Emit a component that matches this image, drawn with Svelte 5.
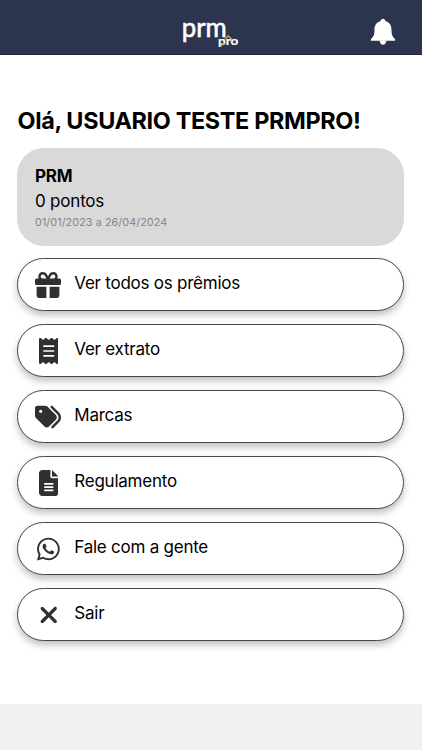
<script>
  const items = [
    { label: 'Ver todos os prêmios', box: '0 0 512 512', w: 26,
      d: 'M190.5 68.8L225.3 128H152c-22.1 0-40-17.9-40-40s17.9-40 40-40h2.2c14.9 0 28.8 7.9 36.3 20.8zM64 88c0 14.4 3.5 28 9.6 40H32c-17.7 0-32 14.3-32 32v64c0 17.7 14.3 32 32 32H480c17.7 0 32-14.3 32-32V160c0-17.7-14.3-32-32-32H438.4c6.1-12 9.6-25.6 9.6-40c0-48.6-39.4-88-88-88h-2.2c-31.9 0-61.5 16.9-77.7 44.4L256 85.5l-24.1-41C215.7 16.9 186.1 0 154.2 0H152C103.4 0 64 39.4 64 88zm336 0c0 22.1-17.9 40-40 40H286.7l34.8-59.2C329.1 55.9 342.9 48 357.8 48H360c22.1 0 40 17.9 40 40zM32 288V464c0 26.5 21.5 48 48 48H224V288H32zM288 512H432c26.5 0 48-21.5 48-48V288H288V512z' },
    { label: 'Ver extrato', box: '0 0 384 512', w: 19.5,
      d: 'M14 2.2C22.5-1.7 32.5-.3 39.6 5.8L80 40.4 120.4 5.8c9-7.7 22.3-7.7 31.2 0L192 40.4 232.4 5.8c9-7.7 22.3-7.7 31.2 0L304 40.4 344.4 5.8c7.1-6.1 17.1-7.5 25.6-3.6s14 12.4 14 21.8V488c0 9.4-5.5 17.9-14 21.8s-18.5 2.5-25.6-3.6L304 471.6l-40.4 34.6c-9 7.7-22.3 7.7-31.2 0L192 471.6l-40.4 34.6c-9 7.7-22.3 7.7-31.2 0L80 471.6 39.6 506.2c-7.1 6.1-17.1 7.5-25.6 3.6S0 497.4 0 488V24C0 14.6 5.5 6.1 14 2.2zM96 144c-8.8 0-16 7.2-16 16s7.2 16 16 16H288c8.8 0 16-7.2 16-16s-7.2-16-16-16H96zM80 352c0 8.8 7.2 16 16 16H288c8.8 0 16-7.2 16-16s-7.2-16-16-16H96c-8.8 0-16 7.2-16 16zM96 240c-8.8 0-16 7.2-16 16s7.2 16 16 16H288c8.8 0 16-7.2 16-16s-7.2-16-16-16H96z' },
    { label: 'Marcas', box: '0 0 512 512', w: 26,
      d: 'M345 39.1L472.8 168.4c52.4 53 52.4 138.2 0 191.2L360.8 472.9c-9.3 9.4-24.5 9.5-33.9 .2s-9.5-24.5-.2-33.9L438.6 325.9c33.9-34.3 33.9-89.4 0-123.7L310.9 72.9c-9.3-9.4-9.2-24.6 .2-33.9s24.6-9.2 33.9 .2zM0 229.5V80C0 53.5 21.5 32 48 32H197.5c17 0 33.3 6.7 45.3 18.7l168 168c25 25 25 65.5 0 90.5L277.3 442.7c-25 25-65.5 25-90.5 0l-168-168C6.7 262.7 0 246.5 0 229.5zM144 144a32 32 0 1 0 -64 0 32 32 0 1 0 64 0z' },
    { label: 'Regulamento', box: '0 0 384 512', w: 19.5,
      d: 'M64 0C28.7 0 0 28.7 0 64V448c0 35.3 28.7 64 64 64H320c35.3 0 64-28.7 64-64V160H256c-17.7 0-32-14.3-32-32V0H64zM256 0V128H384L256 0zM112 256H272c8.8 0 16 7.2 16 16s-7.2 16-16 16H112c-8.8 0-16-7.2-16-16s7.2-16 16-16zm0 64H272c8.8 0 16 7.2 16 16s-7.2 16-16 16H112c-8.8 0-16-7.2-16-16s7.2-16 16-16zm0 64H272c8.8 0 16 7.2 16 16s-7.2 16-16 16H112c-8.8 0-16-7.2-16-16s7.2-16 16-16z' },
    { label: 'Fale com a gente', box: '0 0 448 512', w: 22.75,
      d: 'M380.9 97.1C339 55.1 283.2 32 223.9 32c-122.4 0-222 99.6-222 222 0 39.1 10.2 77.3 29.6 111L0 480l117.7-30.9c32.4 17.7 68.9 27 106.1 27h.1c122.3 0 224.1-99.6 224.1-222 0-59.3-25.2-115-67.1-157zm-157 341.6c-33.2 0-65.7-8.9-94-25.7l-6.7-4-69.8 18.3L72 359.2l-4.4-7c-18.5-29.4-28.2-63.3-28.2-98.2 0-101.7 82.8-184.5 184.6-184.5 49.3 0 95.6 19.2 130.4 54.1 34.8 34.9 56.2 81.2 56.1 130.5 0 101.8-84.9 184.6-186.6 184.6zm101.2-138.2c-5.5-2.8-32.8-16.2-37.9-18-5.1-1.9-8.8-2.8-12.5 2.8-3.7 5.6-14.3 18-17.6 21.8-3.2 3.7-6.5 4.2-12 1.4-32.6-16.3-54-29.1-75.5-66-5.7-9.8 5.7-9.1 16.3-30.3 1.8-3.7.9-6.9-.5-9.7-1.4-2.8-12.5-30.1-17.1-41.2-4.5-10.8-9.1-9.3-12.5-9.5-3.2-.2-6.9-.2-10.6-.2-3.7 0-9.7 1.4-14.8 6.9-5.1 5.6-19.4 19-19.4 46.3 0 27.3 19.9 53.7 22.6 57.4 2.8 3.7 39.1 59.7 94.8 83.8 35.2 15.2 49 16.5 66.6 13.9 10.7-1.6 32.8-13.4 37.4-26.4 4.6-13 4.6-24.1 3.2-26.4-1.3-2.5-5-3.9-10.5-6.6z' },
    { label: 'Sair', box: '0 0 384 512', w: 19.5,
      d: 'M342.6 150.6c12.5-12.5 12.5-32.8 0-45.3s-32.8-12.5-45.3 0L192 210.7 86.6 105.4c-12.5-12.5-32.8-12.5-45.3 0s-12.5 32.8 0 45.3L146.7 256 41.4 361.4c-12.5 12.5-12.5 32.8 0 45.3s32.8 12.5 45.3 0L192 301.3 297.4 406.6c12.5 12.5 32.8 12.5 45.3 0s12.5-32.8 0-45.3L237.3 256 342.6 150.6z' }
  ];
</script>

<div class="screen">
  <header>
    <svg class="logo" viewBox="0 0 62 34" role="img" aria-label="prm pro">
      <text class="big" x="1.8" y="19.2" textLength="45" lengthAdjust="spacingAndGlyphs">prm</text>
      <text class="small" x="38" y="26.8" textLength="20.3" lengthAdjust="spacingAndGlyphs">pro</text>
      <path class="roof" d="M40.5 28.5l3.5-3.500M44.5 21.5l3.800-3.500 3.7 3.5" />
    </svg>
    <button class="bell" aria-label="Notificações">
      <svg viewBox="0 0 26 28">
        <path d="M13 .8c1.5 0 2.3 1 2.3 2.2 4 1.2 6.2 4.3 6.2 8.5 0 5.5 1.2 7.5 3.2 9.2 1 .9.5 2.1-.7 2.1H2c-1.2 0-1.7-1.2-.7-2.1 2-1.7 3.2-3.7 3.200-9.2 0-4.2 2.2-7.3 6.2-8.500C10.7 1.8 11.500.8 13 .8z" />
        <path d="M9.7 22.500h6.600c0 2.600-1.400 4.200-3.300 4.200s-3.300-1.600-3.300-4.200z" />
      </svg>
    </button>
  </header>

  <main>
    <h1>Olá, USUARIO TESTE PRMPRO!</h1>
    <section class="card">
      <strong>PRM</strong>
      <span class="points">0 pontos</span>
      <small>01/01/2023 a 26/04/2024</small>
    </section>
    <nav>
      {#each items as item}
        <button class="row">
          <span class="icon">
            <svg viewBox={item.box} width={item.w} height="26"><path d={item.d} /></svg>
          </span>
          <span class="label">{item.label}</span>
        </button>
      {/each}
    </nav>
  </main>
  <footer></footer>
</div>

<style>
  :global(body) { margin: 0; background: #fff; }
  .screen {
    width: 422px; height: 750px; display: flex; flex-direction: column; overflow: hidden;
    font-family: Inter, "Liberation Sans", sans-serif; color: #000; background: #fff;
  }
  button { font: inherit; color: inherit; padding: 0; border: 0; background: none; }
  header {
    height: 55px; flex: none; box-sizing: border-box; background: #2c344e; border-bottom: 1px solid #22283f;
    display: grid; grid-template-columns: 1fr 62px 1fr; align-items: start;
  }
  .logo { grid-column: 2; width: 62px; height: 34px; margin-top: 18px; overflow: visible; }
  .logo text { fill: #fff; stroke: #fff; font-family: Lato, sans-serif; }
  .big { font-size: 26px; stroke-width: .6; }
  .small { font-size: 12px; font-weight: 700; stroke-width: .2; }
  .roof { fill: none; stroke: #d4a44c; stroke-width: 1.3; }
  .bell { justify-self: end; margin: 18px 26px 0 0; width: 26px; height: 28px; }
  .bell svg { display: block; fill: #fff; width: 26px; height: 28px; }
  main { flex: 1; display: flex; flex-direction: column; padding: 50px 18px 0 17px; }
  h1 { margin: 0 0 0 .5px; font-size: 23.4px; line-height: 32px; font-weight: 700; letter-spacing: -.34px; white-space: nowrap; }
  .card {
    box-sizing: border-box; height: 98px; margin-top: 11px; padding: 16px 18px 0; border-radius: 27px;
    background: #d9d9d9; display: flex; flex-direction: column;
  }
  .card strong { font-size: 17px; line-height: 24px; font-weight: 700; letter-spacing: -.2px; }
  .points { font-size: 17px; line-height: 26px; letter-spacing: -.2px; }
  small { font-size: 10.8px; line-height: 18px; color: #858585; letter-spacing: .07px; }
  nav { display: flex; flex-direction: column; gap: 13px; margin-top: 12px; }
  .row {
    height: 53px; box-sizing: border-box; border: 1px solid #484848; border-radius: 27px; background: #fff;
    box-shadow: 0 4px 7px rgba(0, 0, 0, .25); display: flex; align-items: center; padding: 1px 0 0 17.3px; text-align: left;
  }
  .icon { width: 26px; height: 26px; display: flex; justify-content: center; flex: none; }
  .icon svg { display: block; fill: #303030; }
  .label { margin-left: 13px; padding-bottom: 5px; font-size: 17px; line-height: 22px; letter-spacing: -.24px; }
  footer { height: 46px; flex: none; background: #f0f0f0; }
</style>
